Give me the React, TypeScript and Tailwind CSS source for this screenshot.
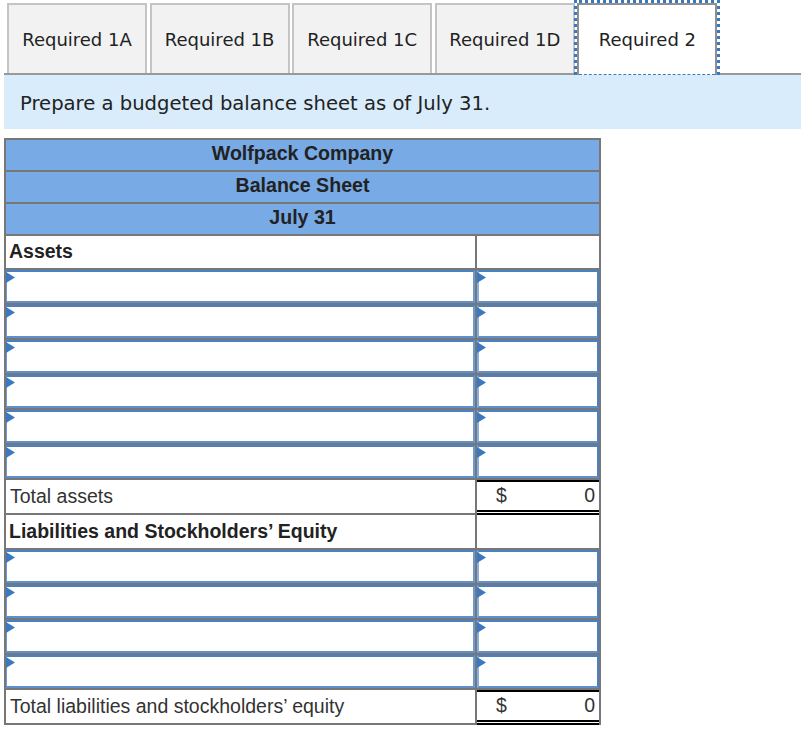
const tabs = ["Required 1A", "Required 1B", "Required 1C", "Required 1D"];

function Triangle() {
  return (
    <svg className="absolute left-0 top-0" width="9" height="11" viewBox="0 0 9 11">
      <path d="M0 0 L9 5.5 L0 11 Z" fill="#3b78c2" />
    </svg>
  );
}

function InputRow() {
  return (
    <div className="flex h-[35px] border-b-2 border-[#777777]">
      <div className="relative w-[469px] border-2 border-l border-[#4a80c4] border-l-[#6a9ad4] border-r-[#6a9ad4] border-b-[#5f8fcc] bg-white shrink-0">
        <div className="absolute -left-px top-0"><Triangle /></div>
      </div>
      <div className="w-[2px] bg-[#777777] shrink-0" />
      <div className="relative flex-1 border-2 border-[#4a80c4] border-l-[#86afe0] border-b-[#5f8fcc] bg-white">
        <div className="absolute -left-0.5 top-0"><Triangle /></div>
      </div>
    </div>
  );
}

function TotalRow({ label }: { label: string }) {
  return (
    <div className="flex h-[35px] border-b-2 border-[#777777]">
      <div className="w-[469px] shrink-0 flex items-center pl-[4px] text-[19.5px] text-[#333333]">{label}</div>
      <div className="w-[2px] bg-[#777777] shrink-0" />
      <div className="flex-1 relative -mb-[2px] flex items-center justify-between pl-[19px] pr-[4px] text-[19.5px] text-[#333333] border-t-2 border-black border-b-[5px] border-double">
        <span>$</span>
        <span>0</span>
      </div>
    </div>
  );
}

function HeadingRow({ label }: { label: string }) {
  return (
    <div className="flex h-[35px] border-b-2 border-[#777777]">
      <div className="w-[469px] shrink-0 flex items-center pl-[3px] text-[19.5px] font-bold text-[#222222]">{label}</div>
      <div className="w-[2px] bg-[#777777] shrink-0" />
      <div className="flex-1" />
    </div>
  );
}

export default function App() {
  return (
    <div className="w-[801px] h-[736px] bg-white overflow-hidden font-['Liberation_Sans',Arial,sans-serif]">
      <div className="flex h-[75px] pt-[3px] ml-[4px] pl-[3px] gap-[2.6px] border-b-2 border-[#999999]">
        {tabs.map((t) => (
          <div
            key={t}
            className="w-[140px] h-[70px] border-2 border-b-0 border-[#c4c4c4] bg-[#f2f2f2] flex items-center justify-center font-['DejaVu_Sans',Verdana,sans-serif] text-[18px] text-[#222222]"
          >
            {t}
          </div>
        ))}
        <div className="relative w-[140px] h-[72px] border-2 border-b-0 border-[#8f8f8f] bg-white flex items-center justify-center pb-[2px] font-['DejaVu_Sans',Verdana,sans-serif] text-[18px] text-[#222222]">
          Required 2
          <div className="absolute -left-[5px] -right-[5px] -top-[5px] bottom-0 border-[3px] border-b-0 border-dotted border-[#3b78c2]" />
          <div className="absolute -left-[5px] -right-[5px] bottom-0 border-b border-dashed border-[#3b78c2]" />
        </div>
      </div>
      <div className="ml-[4px] h-[54px] bg-[#d9ecfb] flex items-center pl-[16px] pt-[3px] font-['DejaVu_Sans',Verdana,sans-serif] text-[19.6px] text-[#222222]">
        Prepare a budgeted balance sheet as of July 31.
      </div>
      <div className="ml-[4px] mt-[9px] w-[597px] border-2 border-b-0 border-[#777777]">
        {["Wolfpack Company", "Balance Sheet", "July 31"].map((h) => (
          <div
            key={h}
            className="h-[32px] border-b-2 border-[#777777] bg-[#78aae6] flex items-center justify-center pb-[2px] text-[19.6px] font-bold text-[#222222]"
          >
            {h}
          </div>
        ))}
        <div className="-mt-px">
          <HeadingRow label="Assets" />
          <InputRow />
          <InputRow />
          <InputRow />
          <InputRow />
          <InputRow />
          <InputRow />
          <TotalRow label="Total assets" />
          <HeadingRow label="Liabilities and Stockholders’ Equity" />
          <InputRow />
          <InputRow />
          <InputRow />
          <InputRow />
          <TotalRow label="Total liabilities and stockholders’ equity" />
        </div>
      </div>
    </div>
  );
}
